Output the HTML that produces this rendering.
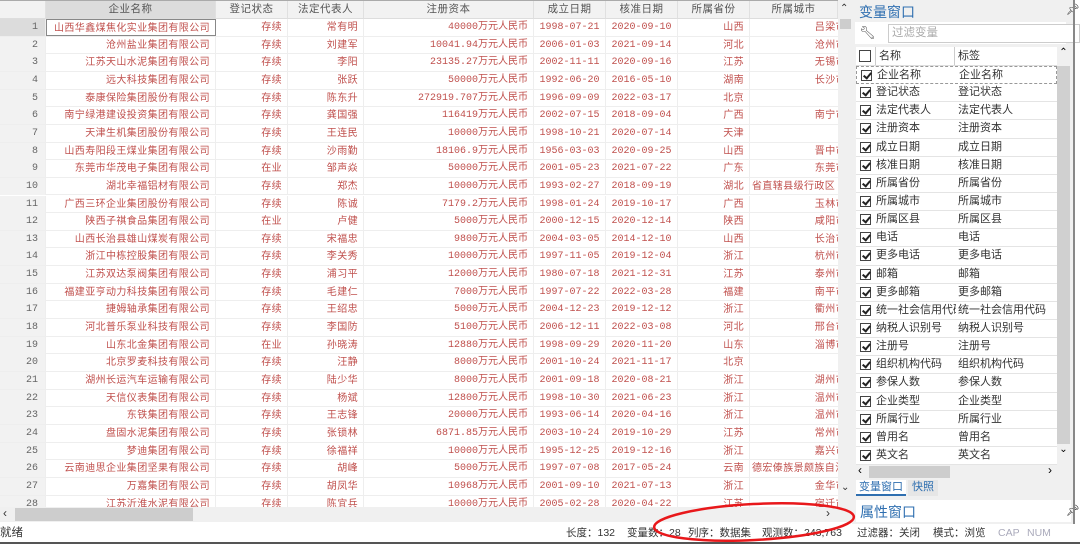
<!DOCTYPE html>
<html><head><meta charset="utf-8"><style>
*{margin:0;padding:0;box-sizing:border-box}
body{width:1080px;height:544px;overflow:hidden;background:#fff;font-family:"Liberation Sans","Noto Sans CJK SC",sans-serif;position:relative}
.abs{position:absolute}
#grid{position:absolute;left:0;top:0;width:838px;height:507px;overflow:hidden;background:#fff;border-top:1px solid #aaa}
.hdr{position:absolute;top:0;height:18px;background:#f2f2f2;border-right:1px solid #e0e0e0;border-bottom:1px solid #ddd;font-size:10.5px;color:#555;text-align:center;line-height:17px;letter-spacing:0.5px}
.row{position:absolute;left:0;height:17.65px;width:850px;border-bottom:1px solid #eee;font-size:10px;color:#c0504d;line-height:17px;white-space:nowrap;letter-spacing:0.4px}
.row span{position:absolute;top:0;height:17px;overflow:hidden;text-align:right;padding-right:5px;border-right:1px solid #eee}
.row .n{left:0;width:46px;background:#f2f2f2;color:#666;text-align:right;padding-right:7px;font-family:"Liberation Mono",monospace;font-size:10px;letter-spacing:0}
.row .c1{left:46px;width:170px}
.row .c2{left:216px;width:72px}
.row .c3{left:288px;width:76px}
.row .c4{left:364px;width:170px;font-family:"Liberation Mono","Noto Sans CJK SC",monospace;font-size:10px;letter-spacing:0}
.row .c5{left:534px;width:72px;font-family:"Liberation Mono",monospace;font-size:10px;text-align:center;padding:0;letter-spacing:0}
.row .c6{left:606px;width:72px;font-family:"Liberation Mono",monospace;font-size:10px;text-align:center;padding:0;letter-spacing:0}
.row .c7{left:678px;width:72px}
.row .c8{left:750px;width:96px;padding-right:0;border-right:none}
#rp{position:absolute;left:852px;top:0;width:221px;height:524px;background:#f0f0f0}
.vr{position:absolute;left:4px;width:201px;height:18.14px;background:#fff;border-bottom:1px solid #e4e4e4;font-size:11px;color:#333;line-height:17px;overflow:hidden;white-space:nowrap}
.vr i{position:absolute;left:4px;top:3px;width:11px;height:11px;border:1px solid #444;background:#fff}
.vr i:after{content:"";position:absolute;left:3px;top:0px;width:3px;height:6px;border:solid #222;border-width:0 2px 2px 0;transform:rotate(40deg)}
.vr b{font-weight:normal;position:absolute;left:20px;width:80px;overflow:hidden}
.vr u{text-decoration:none;position:absolute;left:102px}
#sb{position:absolute;left:0;top:524px;width:1080px;height:20px;background:#fff;font-size:10.5px;color:#333;line-height:19px;border-bottom:2px solid #555}
#sb span{position:absolute;top:0;white-space:nowrap}
</style></head><body>
<div id="grid">
<div class="hdr" style="left:0;width:46px"></div>
<div class="hdr" style="left:46px;width:170px;background:#dcdcdc">企业名称</div>
<div class="hdr" style="left:216px;width:72px">登记状态</div>
<div class="hdr" style="left:288px;width:76px">法定代表人</div>
<div class="hdr" style="left:364px;width:170px">注册资本</div>
<div class="hdr" style="left:534px;width:72px">成立日期</div>
<div class="hdr" style="left:606px;width:72px">核准日期</div>
<div class="hdr" style="left:678px;width:72px">所属省份</div>
<div class="hdr" style="left:750px;width:88px">所属城市</div>

<div class="row" style="top:18px"><span class="n" style="background:#dcdcdc">1</span><span class="c1" style="border:1px solid #888">山西华鑫煤焦化实业集团有限公司</span><span class="c2">存续</span><span class="c3">常有明</span><span class="c4">40000万元人民币</span><span class="c5">1998-07-21</span><span class="c6">2020-09-10</span><span class="c7">山西</span><span class="c8">吕梁市</span></div>
<div class="row" style="top:35.65px"><span class="n">2</span><span class="c1">沧州盐业集团有限公司</span><span class="c2">存续</span><span class="c3">刘建军</span><span class="c4">10041.94万元人民币</span><span class="c5">2006-01-03</span><span class="c6">2021-09-14</span><span class="c7">河北</span><span class="c8">沧州市</span></div>
<div class="row" style="top:53.3px"><span class="n">3</span><span class="c1">江苏天山水泥集团有限公司</span><span class="c2">存续</span><span class="c3">李阳</span><span class="c4">23135.27万元人民币</span><span class="c5">2002-11-11</span><span class="c6">2020-09-16</span><span class="c7">江苏</span><span class="c8">无锡市</span></div>
<div class="row" style="top:70.95px"><span class="n">4</span><span class="c1">远大科技集团有限公司</span><span class="c2">存续</span><span class="c3">张跃</span><span class="c4">50000万元人民币</span><span class="c5">1992-06-20</span><span class="c6">2016-05-10</span><span class="c7">湖南</span><span class="c8">长沙市</span></div>
<div class="row" style="top:88.6px"><span class="n">5</span><span class="c1">泰康保险集团股份有限公司</span><span class="c2">存续</span><span class="c3">陈东升</span><span class="c4">272919.707万元人民币</span><span class="c5">1996-09-09</span><span class="c6">2022-03-17</span><span class="c7">北京</span><span class="c8"></span></div>
<div class="row" style="top:106.25px"><span class="n">6</span><span class="c1">南宁绿港建设投资集团有限公司</span><span class="c2">存续</span><span class="c3">龚国强</span><span class="c4">116419万元人民币</span><span class="c5">2002-07-15</span><span class="c6">2018-09-04</span><span class="c7">广西</span><span class="c8">南宁市</span></div>
<div class="row" style="top:123.9px"><span class="n">7</span><span class="c1">天津生机集团股份有限公司</span><span class="c2">存续</span><span class="c3">王连民</span><span class="c4">10000万元人民币</span><span class="c5">1998-10-21</span><span class="c6">2020-07-14</span><span class="c7">天津</span><span class="c8"></span></div>
<div class="row" style="top:141.55px"><span class="n">8</span><span class="c1">山西寿阳段王煤业集团有限公司</span><span class="c2">存续</span><span class="c3">沙雨勤</span><span class="c4">18106.9万元人民币</span><span class="c5">1956-03-03</span><span class="c6">2020-09-25</span><span class="c7">山西</span><span class="c8">晋中市</span></div>
<div class="row" style="top:159.2px"><span class="n">9</span><span class="c1">东莞市华茂电子集团有限公司</span><span class="c2">在业</span><span class="c3">邹声焱</span><span class="c4">50000万元人民币</span><span class="c5">2001-05-23</span><span class="c6">2021-07-22</span><span class="c7">广东</span><span class="c8">东莞市</span></div>
<div class="row" style="top:176.85px"><span class="n">10</span><span class="c1">湖北幸福铝材有限公司</span><span class="c2">存续</span><span class="c3">郑杰</span><span class="c4">10000万元人民币</span><span class="c5">1993-02-27</span><span class="c6">2018-09-19</span><span class="c7">湖北</span><span class="c8" style="text-align:left;padding-left:2px">省直辖县级行政区</span></div>
<div class="row" style="top:194.5px"><span class="n">11</span><span class="c1">广西三环企业集团股份有限公司</span><span class="c2">存续</span><span class="c3">陈诚</span><span class="c4">7179.2万元人民币</span><span class="c5">1998-01-24</span><span class="c6">2019-10-17</span><span class="c7">广西</span><span class="c8">玉林市</span></div>
<div class="row" style="top:212.15px"><span class="n">12</span><span class="c1">陕西子祺食品集团有限公司</span><span class="c2">在业</span><span class="c3">卢健</span><span class="c4">5000万元人民币</span><span class="c5">2000-12-15</span><span class="c6">2020-12-14</span><span class="c7">陕西</span><span class="c8">咸阳市</span></div>
<div class="row" style="top:229.8px"><span class="n">13</span><span class="c1">山西长治县雄山煤炭有限公司</span><span class="c2">存续</span><span class="c3">宋福忠</span><span class="c4">9800万元人民币</span><span class="c5">2004-03-05</span><span class="c6">2014-12-10</span><span class="c7">山西</span><span class="c8">长治市</span></div>
<div class="row" style="top:247.45px"><span class="n">14</span><span class="c1">浙江中栋控股集团有限公司</span><span class="c2">存续</span><span class="c3">李关秀</span><span class="c4">10000万元人民币</span><span class="c5">1997-11-05</span><span class="c6">2019-12-04</span><span class="c7">浙江</span><span class="c8">杭州市</span></div>
<div class="row" style="top:265.1px"><span class="n">15</span><span class="c1">江苏双达泵阀集团有限公司</span><span class="c2">存续</span><span class="c3">浦习平</span><span class="c4">12000万元人民币</span><span class="c5">1980-07-18</span><span class="c6">2021-12-31</span><span class="c7">江苏</span><span class="c8">泰州市</span></div>
<div class="row" style="top:282.75px"><span class="n">16</span><span class="c1">福建亚亨动力科技集团有限公司</span><span class="c2">存续</span><span class="c3">毛建仁</span><span class="c4">7000万元人民币</span><span class="c5">1997-07-22</span><span class="c6">2022-03-28</span><span class="c7">福建</span><span class="c8">南平市</span></div>
<div class="row" style="top:300.4px"><span class="n">17</span><span class="c1">捷姆轴承集团有限公司</span><span class="c2">存续</span><span class="c3">王绍忠</span><span class="c4">5000万元人民币</span><span class="c5">2004-12-23</span><span class="c6">2019-12-12</span><span class="c7">浙江</span><span class="c8">衢州市</span></div>
<div class="row" style="top:318.05px"><span class="n">18</span><span class="c1">河北普乐泵业科技有限公司</span><span class="c2">存续</span><span class="c3">李国防</span><span class="c4">5100万元人民币</span><span class="c5">2006-12-11</span><span class="c6">2022-03-08</span><span class="c7">河北</span><span class="c8">邢台市</span></div>
<div class="row" style="top:335.7px"><span class="n">19</span><span class="c1">山东北金集团有限公司</span><span class="c2">在业</span><span class="c3">孙晓涛</span><span class="c4">12880万元人民币</span><span class="c5">1998-09-29</span><span class="c6">2020-11-20</span><span class="c7">山东</span><span class="c8">淄博市</span></div>
<div class="row" style="top:353.35px"><span class="n">20</span><span class="c1">北京罗麦科技有限公司</span><span class="c2">存续</span><span class="c3">汪静</span><span class="c4">8000万元人民币</span><span class="c5">2001-10-24</span><span class="c6">2021-11-17</span><span class="c7">北京</span><span class="c8"></span></div>
<div class="row" style="top:371px"><span class="n">21</span><span class="c1">湖州长运汽车运输有限公司</span><span class="c2">存续</span><span class="c3">陆少华</span><span class="c4">8000万元人民币</span><span class="c5">2001-09-18</span><span class="c6">2020-08-21</span><span class="c7">浙江</span><span class="c8">湖州市</span></div>
<div class="row" style="top:388.65px"><span class="n">22</span><span class="c1">天信仪表集团有限公司</span><span class="c2">存续</span><span class="c3">杨斌</span><span class="c4">12800万元人民币</span><span class="c5">1998-10-30</span><span class="c6">2021-06-23</span><span class="c7">浙江</span><span class="c8">温州市</span></div>
<div class="row" style="top:406.3px"><span class="n">23</span><span class="c1">东铁集团有限公司</span><span class="c2">存续</span><span class="c3">王志锋</span><span class="c4">20000万元人民币</span><span class="c5">1993-06-14</span><span class="c6">2020-04-16</span><span class="c7">浙江</span><span class="c8">温州市</span></div>
<div class="row" style="top:423.95px"><span class="n">24</span><span class="c1">盘固水泥集团有限公司</span><span class="c2">存续</span><span class="c3">张锁林</span><span class="c4">6871.85万元人民币</span><span class="c5">2003-10-24</span><span class="c6">2019-10-29</span><span class="c7">江苏</span><span class="c8">常州市</span></div>
<div class="row" style="top:441.6px"><span class="n">25</span><span class="c1">梦迪集团有限公司</span><span class="c2">存续</span><span class="c3">徐福祥</span><span class="c4">10000万元人民币</span><span class="c5">1995-12-25</span><span class="c6">2019-12-16</span><span class="c7">浙江</span><span class="c8">嘉兴市</span></div>
<div class="row" style="top:459.25px"><span class="n">26</span><span class="c1">云南迪思企业集团坚果有限公司</span><span class="c2">存续</span><span class="c3">胡峰</span><span class="c4">5000万元人民币</span><span class="c5">1997-07-08</span><span class="c6">2017-05-24</span><span class="c7">云南</span><span class="c8" style="text-align:left;padding-left:2px">德宏傣族景颇族自治州</span></div>
<div class="row" style="top:476.9px"><span class="n">27</span><span class="c1">万嘉集团有限公司</span><span class="c2">存续</span><span class="c3">胡凤华</span><span class="c4">10968万元人民币</span><span class="c5">2001-09-10</span><span class="c6">2021-07-13</span><span class="c7">浙江</span><span class="c8">金华市</span></div>
<div class="row" style="top:494.55px"><span class="n">28</span><span class="c1">江苏沂淮水泥有限公司</span><span class="c2">存续</span><span class="c3">陈宜兵</span><span class="c4">10000万元人民币</span><span class="c5">2005-02-28</span><span class="c6">2020-04-22</span><span class="c7">江苏</span><span class="c8">宿迁市</span></div>
</div>
<div class="abs" style="left:838px;top:0;width:14px;height:507px;background:#f0f0f0"></div>
<div class="abs" style="left:840px;top:3px;font-size:10px;color:#333">&#8963;</div>
<div class="abs" style="left:840px;top:19px;width:11px;height:10px;background:#cdcdcd"></div>
<div class="abs" style="left:841px;top:482px;font-size:10px;color:#333">&#8964;</div>
<div class="abs" style="left:0;top:507px;width:852px;height:15px;background:#f0f0f0"></div>
<div class="abs" style="left:15px;top:508px;width:178px;height:13px;background:#cdcdcd"></div>
<div class="abs" style="left:3px;top:506px;font-size:12px;color:#333">&lsaquo;</div>
<div class="abs" style="left:826px;top:506px;font-size:12px;color:#333">&rsaquo;</div>

<div id="rp">
 <div class="abs" style="left:7px;top:2px;font-size:14px;color:#2f6fb0">变量窗口</div>
 <div class="abs" style="left:214px;top:3px;font-size:11px;color:#222">&#x1F4CC;&#xFE0E;</div>
 <div class="abs" style="left:3px;top:22px;width:211px;height:22px;background:#fff"></div>
 <div class="abs" style="left:7px;top:25px;font-size:13px;color:#555">&#128295;&#xFE0E;</div>
 <div class="abs" style="left:36px;top:24px;height:19px;border:1px solid #ccc;background:#fff;font-size:11.5px;color:#aaa;padding-left:3px;line-height:17px;width:192px">过滤变量</div>
 <div class="abs" style="left:4px;top:47px;width:214px;height:19px;background:#fff;border-bottom:1px solid #ddd;font-size:11px;color:#333;line-height:18px">
  <i style="position:absolute;left:3px;top:3px;width:12px;height:12px;border:1px solid #444"></i>
  <span class="abs" style="left:19px;top:0;border-left:1px solid #ccc;padding-left:3px">名称</span>
  <span class="abs" style="left:98px;top:0;border-left:1px solid #ccc;padding-left:3px">标签</span>
 </div>
 <div class="abs" style="left:205px;top:66px;width:13px;height:398px;background:#d0d0d0"></div>
 <div class="abs" style="left:205px;top:47px;width:13px;height:19px;background:#f0f0f0;font-size:10px;text-align:center">&#8963;</div>
 <div class="abs" style="left:205px;top:444px;width:13px;height:20px;background:#f0f0f0;font-size:10px;text-align:center">&#8964;</div>
 <div class="vr" style="top:66px;border:1px dashed #999"><i></i><b>企业名称</b><u>企业名称</u></div>
 <div class="vr" style="top:84.14px"><i></i><b>登记状态</b><u>登记状态</u></div>
 <div class="vr" style="top:102.28px"><i></i><b>法定代表人</b><u>法定代表人</u></div>
 <div class="vr" style="top:120.42px"><i></i><b>注册资本</b><u>注册资本</u></div>
 <div class="vr" style="top:138.56px"><i></i><b>成立日期</b><u>成立日期</u></div>
 <div class="vr" style="top:156.7px"><i></i><b>核准日期</b><u>核准日期</u></div>
 <div class="vr" style="top:174.84px"><i></i><b>所属省份</b><u>所属省份</u></div>
 <div class="vr" style="top:192.98px"><i></i><b>所属城市</b><u>所属城市</u></div>
 <div class="vr" style="top:211.12px"><i></i><b>所属区县</b><u>所属区县</u></div>
 <div class="vr" style="top:229.26px"><i></i><b>电话</b><u>电话</u></div>
 <div class="vr" style="top:247.4px"><i></i><b>更多电话</b><u>更多电话</u></div>
 <div class="vr" style="top:265.54px"><i></i><b>邮箱</b><u>邮箱</u></div>
 <div class="vr" style="top:283.68px"><i></i><b>更多邮箱</b><u>更多邮箱</u></div>
 <div class="vr" style="top:301.82px"><i></i><b>统一社会信用代码</b><u>统一社会信用代码</u></div>
 <div class="vr" style="top:319.96px"><i></i><b>纳税人识别号</b><u>纳税人识别号</u></div>
 <div class="vr" style="top:338.1px"><i></i><b>注册号</b><u>注册号</u></div>
 <div class="vr" style="top:356.24px"><i></i><b>组织机构代码</b><u>组织机构代码</u></div>
 <div class="vr" style="top:374.38px"><i></i><b>参保人数</b><u>参保人数</u></div>
 <div class="vr" style="top:392.52px"><i></i><b>企业类型</b><u>企业类型</u></div>
 <div class="vr" style="top:410.66px"><i></i><b>所属行业</b><u>所属行业</u></div>
 <div class="vr" style="top:428.8px"><i></i><b>曾用名</b><u>曾用名</u></div>
 <div class="vr" style="top:446.94px"><i></i><b>英文名</b><u>英文名</u></div>
 <div class="abs" style="left:4px;top:465px;width:201px;height:14px;background:#f0f0f0"></div>
 <div class="abs" style="left:17px;top:466px;width:81px;height:12px;background:#cdcdcd"></div>
 <div class="abs" style="left:6px;top:463px;font-size:12px">&lsaquo;</div>
 <div class="abs" style="left:196px;top:463px;font-size:12px">&rsaquo;</div>
 <div class="abs" style="left:4px;top:480px;width:50px;height:16px;background:#fff;border-bottom:2px solid #2f6fb0;font-size:11px;color:#2f6fb0;text-align:center;line-height:15px">变量窗口</div>
 <div class="abs" style="left:56px;top:480px;width:30px;height:16px;background:#e6e6e6;font-size:11px;color:#2f6fb0;text-align:center;line-height:15px">快照</div>
 <div class="abs" style="left:4px;top:500px;width:215px;height:22px;background:#fff"></div>
 <div class="abs" style="left:8px;top:502px;font-size:14px;color:#2f6fb0">属性窗口</div>
 <div class="abs" style="left:214px;top:504px;font-size:11px">&#x1F4CC;&#xFE0E;</div>
</div>
<div class="abs" style="left:1073px;top:0;width:2px;height:524px;background:#888"></div>

<div id="sb">
 <span style="left:0;font-size:11.5px">就绪</span>
 <span style="left:566px">长度：132</span>
 <span style="left:627px">变量数：28</span>
 <span style="left:688px">列序：数据集</span>
 <span style="left:762px">观测数：243,763</span>
 <span style="left:857px">过滤器：关闭</span>
 <span style="left:933px">模式：浏览</span>
 <span style="left:998px;color:#aab">CAP</span>
 <span style="left:1027px;color:#aab">NUM</span>
</div>
<svg class="abs" style="left:650px;top:500px" width="210" height="44"><ellipse cx="104" cy="22" rx="100" ry="18" fill="none" stroke="#e8181b" stroke-width="2.5" transform="rotate(-3 104 22)"/></svg>
</body></html>
